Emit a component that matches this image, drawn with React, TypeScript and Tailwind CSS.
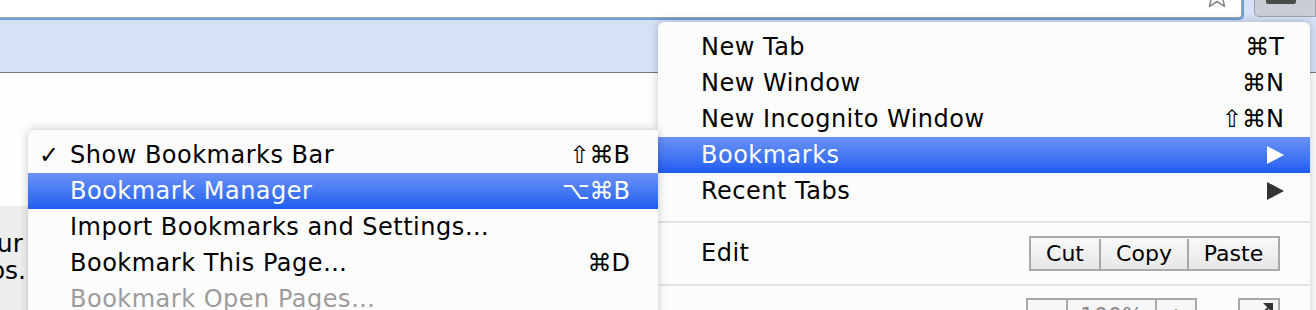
import React from 'react'

const font = "font-['DejaVu_Sans',sans-serif]"

function Arrow({ light }: { light?: boolean }) {
  return (
    <svg width="17" height="18" viewBox="0 0 17 18">
      <polygon points="0,0 17,9 0,18" fill={light ? '#ffffff' : '#333333'} />
    </svg>
  )
}

function MainRow({ label, shortcut, active, arrow }: { label: string; shortcut?: string; active?: boolean; arrow?: boolean }) {
  return (
    <div
      className={`flex items-center justify-between h-[36px] pl-[43px] pr-[26px] ${
        active ? 'bg-linear-to-b from-[#6b92f6] to-[#1e5cf0] text-white' : 'text-black'
      }`}
    >
      <span className="tracking-[0.5px]">{label}</span>
      {shortcut && <span>{shortcut}</span>}
      {arrow && <Arrow light={active} />}
    </div>
  )
}

function SubRow({ label, shortcut, active, checked, disabled }: { label: string; shortcut?: string; active?: boolean; checked?: boolean; disabled?: boolean }) {
  return (
    <div
      className={`flex items-center h-[36px] pr-[28px] ${
        active ? 'bg-linear-to-b from-[#6b92f6] to-[#1e5cf0] text-white' : disabled ? 'text-[#9c9c9c]' : 'text-black'
      }`}
    >
      <span className="w-[42px] pl-[11px] font-bold">{checked ? '✓' : ''}</span>
      <span className="flex-1 tracking-[0.5px]">{label}</span>
      {shortcut && <span>{shortcut}</span>}
    </div>
  )
}

export default function App() {
  return (
    <div className={`relative w-[1316px] h-[310px] overflow-hidden bg-[#fdfdfd] ${font}`}>
      {/* toolbar */}
      <div className="flex h-[20px] bg-[#d6e1f7]">
        <div className="relative w-[1250px] h-[20px] border-b-2 border-r-2 border-[#6a9fd8] rounded-br-[5px]">
          <div className="h-full bg-white border-b border-r border-[#a3a3a3] rounded-br-[4px]" />
          <svg className="absolute right-[12px] -top-[19px]" width="26" height="27" viewBox="0 0 26 27">
            <polygon
              points="13,1 16.5,9.5 25,10 18.5,16 20.5,25.5 13,20.5 5.5,25.5 7.5,16 1,10 9.5,9.5"
              fill="#ffffff"
              stroke="#8c8c8c"
              strokeWidth="1.6"
              strokeLinejoin="round"
            />
          </svg>
        </div>
        <div className="ml-[10px] w-[62px] h-[17px] bg-[#c8cdd6] border border-t-0 border-[#9ea4ae] rounded-bl-[5px] pl-[11px]">
          <div className="w-[30px] h-[4px] bg-[#4c4c4c] rounded-b-[2px]" />
        </div>
      </div>
      <div className="h-[53px] bg-[#d6e1f7] border-b border-[#777777]" />

      {/* page content */}
      <div className="mt-[133px] w-[260px] h-[110px] bg-[#eeeeee] text-[25px] text-black leading-[27px] pt-[24px]">
        <div className="flex justify-end w-[23px] overflow-hidden whitespace-nowrap">your</div>
        <div className="flex justify-end w-[26px] overflow-hidden whitespace-nowrap">apps.</div>
      </div>

      {/* main menu */}
      <div className="absolute left-[658px] top-[22px] w-[652px] h-[300px] bg-[#fcfcfc] rounded-t-[6px] shadow-[0_0_10px_rgba(0,0,0,0.22)] pt-[7px] text-[24px]">
        <MainRow label="New Tab" shortcut="⌘T" />
        <MainRow label="New Window" shortcut="⌘N" />
        <MainRow label="New Incognito Window" shortcut="⇧⌘N" />
        <MainRow label="Bookmarks" active arrow />
        <MainRow label="Recent Tabs" arrow />
        <div className="my-[12px] h-[2px] bg-[#e4e4e4]" />
        <div className="flex items-center justify-between h-[36px] pl-[43px] pr-[30px]">
          <span className="tracking-[0.5px]">Edit</span>
          <div className="flex h-[35px] border-2 border-[#a9a9a9] text-[22px] pt-[1px]">
            <div className="w-[68px] flex items-center justify-center bg-linear-to-b from-[#f8f8f8] to-[#e7e7e7]">Cut</div>
            <div className="w-[88px] flex items-center justify-center border-l-2 border-[#a9a9a9] bg-linear-to-b from-[#f8f8f8] to-[#e7e7e7]">Copy</div>
            <div className="w-[91px] flex items-center justify-center border-l-2 border-[#a9a9a9] bg-linear-to-b from-[#f8f8f8] to-[#e7e7e7]">Paste</div>
          </div>
        </div>
        <div className="mt-[13px] mb-[12px] h-[2px] bg-[#e4e4e4]" />
        <div className="flex items-start justify-between h-[36px] pl-[43px] pr-[30px]">
          <span className="mt-[6px] tracking-[0.5px]">Zoom</span>
          <div className="flex">
            <div className="flex h-[35px] border-2 border-[#a9a9a9] text-[22px]">
              <div className="w-[38px] flex items-center justify-center bg-[#f6f6f6]">−</div>
              <div className="w-[89px] flex items-center justify-center border-l-2 border-[#a9a9a9] bg-[#f6f6f6] text-[#888888]">100%</div>
              <div className="w-[40px] flex items-center justify-center border-l-2 border-[#a9a9a9] bg-[#f6f6f6]">+</div>
            </div>
            <div className="ml-[41px] w-[42px] h-[35px] border-2 border-[#a9a9a9] bg-[#f6f6f6] relative">
              <svg className="absolute right-[5px] top-[3px]" width="12" height="12" viewBox="0 0 12 12">
                <polygon points="2,0 12,0 12,10" fill="#333333" />
                <line x1="0" y1="12" x2="9" y2="3" stroke="#333333" strokeWidth="2" />
              </svg>
            </div>
          </div>
        </div>
      </div>

      {/* bookmarks submenu */}
      <div className="absolute left-[28px] top-[130px] w-[630px] h-[200px] bg-[#fcfcfc] rounded-tl-[6px] shadow-[0_0_10px_rgba(0,0,0,0.22)] pt-[7px] text-[24px]">
        <SubRow label="Show Bookmarks Bar" shortcut="⇧⌘B" checked />
        <SubRow label="Bookmark Manager" shortcut="⌥⌘B" active />
        <SubRow label="Import Bookmarks and Settings…" />
        <SubRow label="Bookmark This Page…" shortcut="⌘D" />
        <SubRow label="Bookmark Open Pages…" disabled />
      </div>
    </div>
  )
}
